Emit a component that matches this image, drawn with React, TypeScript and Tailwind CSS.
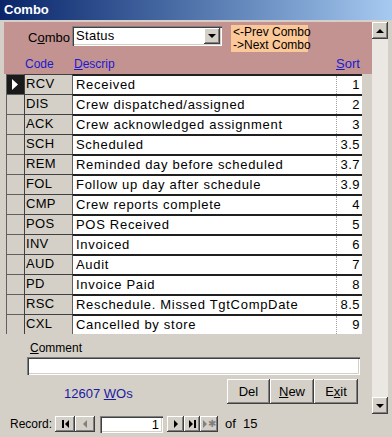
import React from "react";

const rows: [string, string, string][] = [
  ["RCV", "Received", "1"],
  ["DIS", "Crew dispatched/assigned", "2"],
  ["ACK", "Crew acknowledged assignment", "3"],
  ["SCH", "Scheduled", "3.5"],
  ["REM", "Reminded day before scheduled", "3.7"],
  ["FOL", "Follow up day after schedule", "3.9"],
  ["CMP", "Crew reports complete", "4"],
  ["POS", "POS Received", "5"],
  ["INV", "Invoiced", "6"],
  ["AUD", "Audit", "7"],
  ["PD", "Invoice Paid", "8"],
  ["RSC", "Reschedule. Missed TgtCompDate", "8.5"],
  ["CXL", "Cancelled by store", "9"],
];

const raised =
  "bg-[#d4d0c8] shadow-[inset_-1px_-1px_#404040,inset_1px_1px_#ffffff,inset_-2px_-2px_#808080]";
const sunken =
  "bg-white shadow-[inset_1px_1px_#808080,inset_2px_2px_#404040,inset_-1px_-1px_#ffffff,inset_-2px_-2px_#d4d0c8]";

function Tri({ dir, gray }: { dir: "up" | "down" | "left" | "right"; gray?: boolean }) {
  const c = gray ? "#808080" : "#000";
  const pts =
    dir === "up"
      ? "0,4 4,0 8,4"
      : dir === "down"
      ? "0,0 8,0 4,4"
      : dir === "left"
      ? "4,0 4,8 0,4"
      : "0,0 0,8 4,4";
  const w = dir === "up" || dir === "down" ? 8 : 4;
  const h = dir === "up" || dir === "down" ? 4 : 8;
  return (
    <svg width={w} height={h} viewBox={`0 0 ${w} ${h}`}>
      <polygon points={pts} fill={c} />
    </svg>
  );
}

export default function App() {
  return (
    <div
      className="w-[392px] h-[437px] bg-[#d4d0c8] flex flex-col overflow-hidden text-[13px] text-black"
      style={{ fontFamily: '"Liberation Sans", Arial, sans-serif' }}
    >
      {/* Title bar */}
      <div className="h-[20px] shrink-0 flex items-center px-[4px] bg-gradient-to-r from-[#0a246a] to-[#a6caf0] text-white font-bold text-[13px]">
        Combo
      </div>
      <div className="h-[2px] shrink-0" />
      {/* Main */}
      <div className="flex flex-1 pl-[4px] pr-[4px] min-h-0">
        <div className="flex-1 flex flex-col">
          {/* Header pink */}
          <div className="h-[52px] bg-[#c29390] relative shrink-0">
            <div className="flex items-start pt-[4px]">
              <div className="w-[68px] text-right pr-[2px] pt-[2px] text-[13px]">
                C<span className="underline">o</span>mbo
              </div>
              <div className={`w-[150px] h-[20px] ${sunken} flex items-center pl-[4px] pr-[2px]`}>
                <span className="flex-1 tracking-[0.3px]">Status</span>
                <div className={`w-[16px] h-[16px] ${raised} flex items-center justify-center`}>
                  <Tri dir="down" />
                </div>
              </div>
              <div className="ml-[9px] -mt-[1px] w-[77px] h-[27px] bg-[#fcc898] text-[12px] leading-[13px] pl-[2px] pt-[1px] whitespace-nowrap">
                <div>&lt;-Prev Combo</div>
                <div>-&gt;Next Combo</div>
              </div>
            </div>
            <div className="absolute left-0 right-0 top-[33px] flex text-[#1a1ad0] text-[12px]">
              <div className="w-[21px]" />
              <div className="w-[49px]">Code</div>
              <div className="flex-1">
                <span className="underline">D</span>escrip
              </div>
              <div className="w-[36px] text-[13px] -mt-[1px]">
                <span className="underline">S</span>ort
              </div>
            </div>
          </div>
          {/* Detail rows */}
          <div className="flex flex-col pl-[2px]">
            {rows.map(([code, desc, sort], i) => (
              <div key={code} className="flex h-[20px]">
                <div
                  className={`w-[18px] border-t border-l border-[#606060] flex items-center justify-center ${
                    i === 0 ? "bg-[#1a1a1a]" : "bg-[#d4d0c8]"
                  }`}
                >
                  {i === 0 && (
                    <svg width="7" height="11" viewBox="0 0 7 11">
                      <polygon points="0,0 0,11 6,5.5" fill="#fff" />
                    </svg>
                  )}
                </div>
                <div className="w-[48px] border-t border-l border-[#404040] bg-[#d4d0c8] pl-[1px] leading-[18px] tracking-[0.3px]">
                  {code}
                </div>
                <div className="w-[264px] bg-white border-t-2 border-t-[#202020] border-l border-l-[#606060] pl-[3px] leading-[17px] whitespace-nowrap overflow-hidden tracking-[0.7px]">
                  {desc}
                </div>
                <div className="w-[26px] bg-white border-t-2 border-t-[#202020] flex">
                  <div className="flex-1 border-l border-dotted border-[#a0a0a0] text-right pr-[2px] leading-[17px] tracking-[0.5px]">
                    {sort}
                  </div>
                </div>
              </div>
            ))}
          </div>
          {/* Footer */}
          <div className="flex-1 flex flex-col pl-[23px] pr-[12px]">
            <div className="pl-[3px] pt-[7px] leading-[15px] text-[12px]">
              <span className="underline">C</span>omment
            </div>
            <div className={`h-[18px] ${sunken} mt-[1px]`} />
            <div className="flex items-start mt-[4px]">
              <div className="w-[200px] pl-[37px] pt-[5px] text-[#1a1aa0]">
                12607 <span className="underline">W</span>Os
              </div>
              <div className="flex">
                <div className={`w-[43px] h-[25px] ${raised} flex items-center justify-center`}>Del</div>
                <div className={`w-[44px] h-[25px] ${raised} flex items-center justify-center`}>
                  <span className="underline">N</span>ew
                </div>
                <div className={`w-[44px] h-[25px] ${raised} flex items-center justify-center`}>
                  E<span className="underline">x</span>it
                </div>
              </div>
            </div>
          </div>
        </div>
        {/* Scrollbar */}
        <div className="w-[16px] flex flex-col bg-[#ebe8e3]">
          <div className={`h-[17px] ${raised} flex items-center justify-center`}>
            <Tri dir="up" />
          </div>
          <div className="flex-1" />
          <div className={`h-[17px] ${raised} flex items-center justify-center`}>
            <Tri dir="down" />
          </div>
        </div>
      </div>
      {/* Navigation bar */}
      <div className="h-[20px] shrink-0 flex items-center pl-[10px] mb-[3px] text-[12px]">
        <span className="w-[45px]">Record:</span>
        <div className={`w-[20px] h-[16px] ${raised} flex items-center justify-center gap-[1px]`}>
          <div className="w-[2px] h-[8px] bg-black" />
          <Tri dir="left" />
        </div>
        <div className={`w-[20px] h-[16px] ${raised} flex items-center justify-center`}>
          <Tri dir="left" gray />
        </div>
        <div className={`ml-[5px] w-[63px] h-[17px] ${sunken} text-right pr-[4px] leading-[17px] text-[13px]`}>1</div>
        <div className={`ml-[4px] w-[17px] h-[16px] ${raised} flex items-center justify-center`}>
          <Tri dir="right" />
        </div>
        <div className={`w-[16px] h-[16px] ${raised} flex items-center justify-center gap-[1px]`}>
          <Tri dir="right" />
          <div className="w-[2px] h-[8px] bg-black" />
        </div>
        <div className={`w-[18px] h-[16px] ${raised} flex items-center justify-center gap-[1px]`}>
          <Tri dir="right" gray />
          <span className="text-[#808080] text-[10px] leading-[10px]">✱</span>
        </div>
        <span className="ml-[7px] text-[13px]">of&nbsp;&nbsp;15</span>
      </div>
    </div>
  );
}
